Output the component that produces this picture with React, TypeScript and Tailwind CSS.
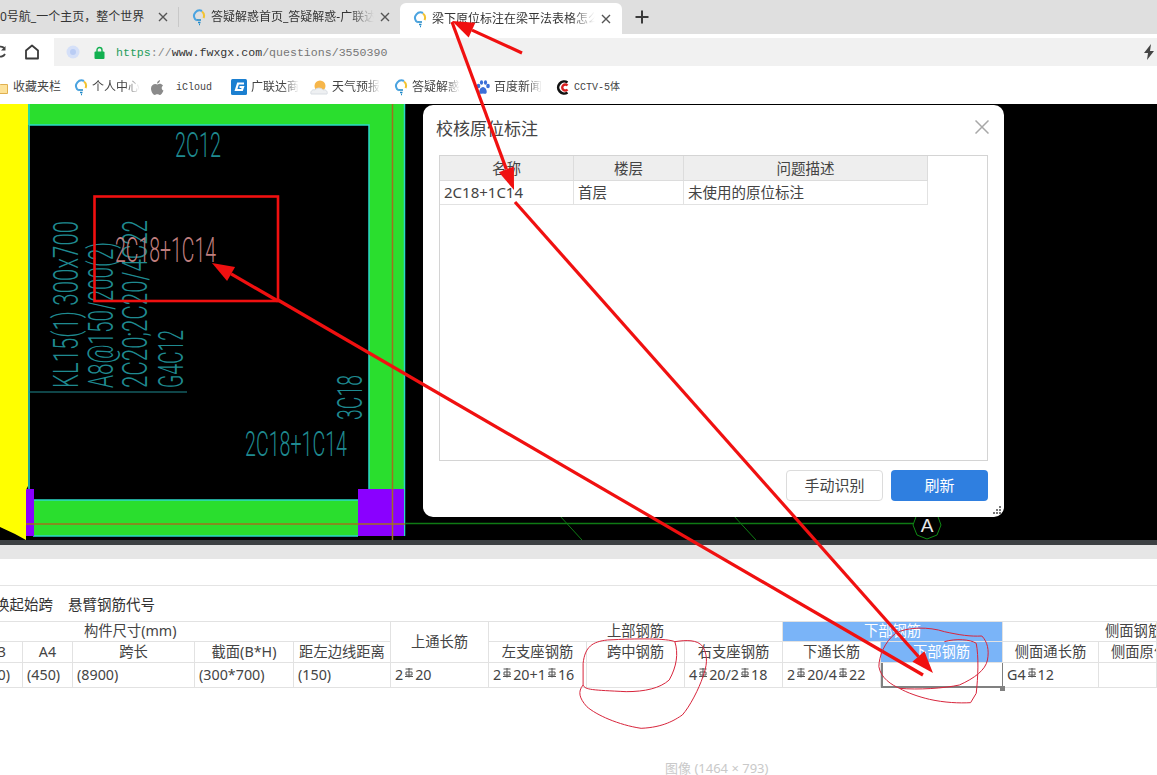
import React from 'react';

const Favicon = () => (
  <svg width="14" height="18" viewBox="0 0 14 18" className="shrink-0">
    <path d="M10 3.5 A5.5 5.5 0 0 1 11.5 10" fill="none" stroke="#f2c230" strokeWidth="2" />
    <path d="M10 3 A5.5 5.5 0 0 0 3 11 L5 12.5" fill="none" stroke="#4aa3e0" strokeWidth="2" />
    <path d="M5 12 L9 12 M6 14.5 L8.5 14.5 M7 16.5 L8 16.5" stroke="#1e88c8" strokeWidth="1.4" />
  </svg>
);

const Close = () => (
  <svg width="10" height="10" viewBox="0 0 10 10" className="shrink-0">
    <path d="M1 1 L9 9 M9 1 L1 9" stroke="#555" strokeWidth="1.4" />
  </svg>
);

// rebar grade symbol used in the table cells
const Bar = () => (
  <svg width="10" height="10" viewBox="0 0 10 10" className="mx-px mb-[5px] inline-block shrink-0">
    <path d="M1.5 1 H8.5 M5 0 V9.5 M1 8.5 H9" stroke="#555" strokeWidth="1" />
    <path d="M2 7 V4 H8 V7 Z" fill="none" stroke="#555" strokeWidth="1" />
  </svg>
);

function Arrow({ x1, y1, x2, y2 }: { x1: number; y1: number; x2: number; y2: number }) {
  const len = Math.hypot(x2 - x1, y2 - y1);
  const ux = (x2 - x1) / len;
  const uy = (y2 - y1) / len;
  const bx = x2 - ux * 22;
  const by = y2 - uy * 22;
  const pts = `${x2},${y2} ${bx - uy * 8},${by + ux * 8} ${bx + uy * 8},${by - ux * 8}`;
  return (
    <g>
      <line x1={x1} y1={y1} x2={bx} y2={by} stroke="#f01010" strokeWidth="3.2" />
      <polygon points={pts} fill="#f01010" />
    </g>
  );
}

function CadText({ x, y, w, children, color = '#1f8a90', vertical = false }: { x: number; y: number; w: number; children: string; color?: string; vertical?: boolean }) {
  return (
    <text
      transform={`translate(${x} ${y})${vertical ? ' rotate(-90)' : ''}`}
      fontFamily="Roboto, 'Liberation Sans', sans-serif"
      fontWeight="300"
      fontSize="35"
      fill={color}
      textLength={w}
      lengthAdjust="spacingAndGlyphs"
    >
      {children}
    </text>
  );
}

function Bookmark({ icon, label, left, fade = true, mono = false }: { icon: React.ReactNode; label: string; left: string; fade?: boolean; mono?: boolean }) {
  return (
    <div className={`flex items-center gap-1 ${left}`}>
      {icon}
      <span className={`overflow-hidden whitespace-nowrap ${mono ? "font-['Liberation_Mono','Noto_Sans_CJK_SC',monospace] text-[10px]" : 'text-xs'} ${fade ? 'w-[48px] [mask-image:linear-gradient(to_right,black_70%,transparent)]' : ''}`}>
        {label}
      </span>
    </div>
  );
}

function Cell({ children, className = '' }: { children?: React.ReactNode; className?: string }) {
  return (
    <div className={`flex items-center overflow-hidden whitespace-nowrap border-r border-b border-[#e2e2e2] ${className}`}>
      {children}
    </div>
  );
}

export default function App() {
  return (
    <div className="relative flex h-[775px] w-[1157px] flex-col overflow-hidden bg-white font-['Noto_Sans','Noto_Sans_CJK_SC',sans-serif] text-[#333]">
      {/* Tabs */}
      <div className="flex h-[34px] shrink-0 bg-[#dfdfdf] text-xs">
        <div className="flex w-[178px] items-center pr-[10px]">
          <span className="flex-1 overflow-hidden whitespace-nowrap">0号航_一个主页，整个世界</span>
          <Close />
        </div>
        <div className="my-[7px] w-px bg-[#c8c8c8]" />
        <div className="flex w-[221px] items-center pl-[13px] pr-[10px]">
          <Favicon />
          <span className="ml-[5px] mr-[6px] flex-1 overflow-hidden whitespace-nowrap [mask-image:linear-gradient(to_right,black_85%,transparent)]">答疑解惑首页_答疑解惑-广联达服务新干线</span>
          <Close />
        </div>
        <div className="mt-[3px] flex w-[222px] items-center rounded-t-md bg-white pl-[13px] pr-[11px]">
          <Favicon />
          <span className="ml-[5px] mr-[6px] flex-1 overflow-hidden whitespace-nowrap [mask-image:linear-gradient(to_right,black_85%,transparent)]">梁下原位标注在梁平法表格怎么输入</span>
          <Close />
        </div>
        <div className="ml-[13px] flex items-center">
          <svg width="14" height="14" viewBox="0 0 14 14">
            <path d="M7 0.5 V13.5 M0.5 7 H13.5" stroke="#3a3a3a" strokeWidth="2" />
          </svg>
        </div>
      </div>

      {/* Address row */}
      <div className="mt-1 flex h-[28px] shrink-0 items-center">
        <div className="flex w-[54px] items-center">
          <svg width="12" height="14" viewBox="0 0 12 14" className="ml-[-6px]">
            <path d="M10.5 3.5 A5 5 0 1 0 11 9" fill="none" stroke="#444" strokeWidth="1.8" />
            <path d="M11.5 1 V5.5 H7" fill="#444" />
          </svg>
          <svg width="16" height="16" viewBox="0 0 16 16" className="ml-[18px]">
            <path d="M2 14.5 V6.5 L8 1.5 L14 6.5 V14.5 Z" fill="none" stroke="#3a3a3a" strokeWidth="1.8" strokeLinejoin="round" />
          </svg>
        </div>
        <div className="flex h-full flex-1 items-center bg-[#f1f1f1]">
          <svg width="14" height="14" viewBox="0 0 14 14" className="ml-[12px]">
            <circle cx="7" cy="7" r="6.5" fill="#d5e0f8" />
            <circle cx="7" cy="7" r="3" fill="#b9ccf4" />
          </svg>
          <svg width="11" height="13" viewBox="0 0 11 13" className="ml-[14px]">
            <path d="M3 6 V4 A2.5 2.5 0 0 1 8 4 V6" fill="none" stroke="#12b050" strokeWidth="1.4" />
            <rect x="0.5" y="5.5" width="10" height="7.5" rx="1" fill="#12b050" />
          </svg>
          <span className="ml-[11px] mt-px font-['Liberation_Mono',monospace] text-[11.6px]">
            <span className="text-[#1f9d5c]">https</span>
            <span className="text-[#888]">://</span>
            <span className="text-[#333]">www.fwxgx.com</span>
            <span className="text-[#777]">/questions/3550390</span>
          </span>
          <svg width="12" height="16" viewBox="0 0 12 16" className="ml-auto mr-[2px]">
            <path d="M8 0 L1 9 H5 L4 16 L11 7 H7 Z" fill="#444" />
          </svg>
        </div>
      </div>

      {/* Bookmarks */}
      <div className="flex h-[38px] shrink-0 items-center pt-[4px] text-[#444]">
        <Bookmark
          left="ml-[-7px]"
          fade={false}
          label="收藏夹栏"
          icon={
            <svg width="15" height="13" viewBox="0 0 15 13" className="mr-px">
              <path d="M0.5 2 H6 L7.5 3.5 H14.5 V12.5 H0.5 Z" fill="#fde29a" stroke="#e0b050" />
            </svg>
          }
        />
        <Bookmark left="ml-[13px]" label="个人中心" icon={<Favicon />} />
        <Bookmark
          left="ml-[11px]"
          fade={false}
          mono
          label="iCloud"
          icon={
            <svg width="13" height="15" viewBox="0 0 13 15" className="mr-[8px]">
              <path d="M9 0 C9 2 7.5 3.5 6 3.5 C6 2 7.5 0.3 9 0 Z M6.5 4.5 C8 3.5 10.5 3.5 12 5.5 C10 7 10.5 10 12.5 10.5 C11.5 13 10 15 8.8 15 C7.8 15 7.5 14.3 6.3 14.3 C5 14.3 4.8 15 3.8 15 C2.2 15 0 11.5 0 8.5 C0 4.5 4 3 6.5 4.5 Z" fill="#8a8a8a" />
            </svg>
          }
        />
        <Bookmark
          left="ml-[19px]"
          label="广联达商务"
          icon={
            <svg width="16" height="16" viewBox="0 0 16 16">
              <rect width="16" height="16" rx="1.5" fill="#1b7fd0" />
              <path d="M13 4.5 H7 L5 11 H11 L12 8 H8.5" fill="none" stroke="#fff" strokeWidth="2.2" />
            </svg>
          }
        />
        <Bookmark
          left="ml-[11px]"
          label="天气预报"
          icon={
            <svg width="18" height="16" viewBox="0 0 18 16">
              <circle cx="10" cy="7" r="5.5" fill="#f6b64a" />
              <path d="M1 15 C0 12 3 10 5 11 C7 8 12 9 13 11 C16 10 18 13 17 15 Z" fill="#eef0f2" stroke="#d8dde2" />
            </svg>
          }
        />
        <Bookmark left="ml-[14px]" label="答疑解惑" icon={<Favicon />} />
        <Bookmark
          left="ml-[16px]"
          label="百度新闻"
          icon={
            <svg width="14" height="15" viewBox="0 0 14 15">
              <g fill="#3b6fd8">
                <ellipse cx="2.5" cy="6" rx="1.8" ry="2.3" />
                <ellipse cx="5.5" cy="2.5" rx="1.6" ry="2.2" />
                <ellipse cx="9.5" cy="2.5" rx="1.6" ry="2.2" />
                <ellipse cx="12" cy="6" rx="1.8" ry="2.3" />
                <path d="M7 7 C9.5 7 11.5 11 10.5 13 C9.5 14.5 8 13.5 7 13.5 C6 13.5 4.5 14.5 3.5 13 C2.5 11 4.5 7 7 7 Z" />
              </g>
            </svg>
          }
        />
        <Bookmark
          left="ml-[13px]"
          fade={false}
          mono
          label="CCTV-5体"
          icon={
            <svg width="15" height="15" viewBox="0 0 15 15">
              <path d="M12.5 2.5 A6 6 0 1 0 12.5 12.5" fill="none" stroke="#111" strokeWidth="2.6" />
              <path d="M12.5 5.5 A3 3 0 1 0 12.5 9.5" fill="none" stroke="#d81e1e" strokeWidth="2.4" />
            </svg>
          }
        />
      </div>

      {/* CAD canvas */}
      <div className="h-[436px] shrink-0 bg-black">
        <svg width="1157" height="436" viewBox="0 104 1157 436" className="block">
          <rect x="28" y="104" width="377" height="21" fill="#2ade2e" />
          <rect x="369" y="104" width="36" height="386" fill="#2ade2e" />
          <rect x="33" y="500" width="326" height="36" fill="#2ade2e" />
          <path d="M29 125 H369 V489 M29 104 V500 H358 M33 536 H358 M404.5 104 V536" fill="none" stroke="#2bd9c8" strokeWidth="1.5" />
          <rect x="358" y="489" width="46" height="47" fill="#8a00ff" />
          <rect x="26" y="489" width="8" height="47" fill="#8a00ff" />
          <path d="M0 104 H28 V486 L26 490 V540 L15 534 L0 527 Z" fill="#ffff00" />
          <path d="M392.5 104 V540" stroke="#a0701e" strokeWidth="1.5" />
          <path d="M26 524 H405" stroke="#a0701e" strokeWidth="1.5" />
          <path d="M405 523.5 H913" stroke="#0f7a14" strokeWidth="1.5" />
          <path d="M560 516 L582 540 M733 515 L756 540" stroke="#0f7a14" strokeWidth="1" />
          <polygon points="927,510 937,514 941,525 937,535 927,539 917,535 913,525 917,514" fill="#000" stroke="#0f8a14" strokeWidth="1" />
          <text x="927" y="532" textAnchor="middle" fontFamily="'Liberation Sans', sans-serif" fontSize="19" fill="#e8e8e8">A</text>

          <path d="M29 392 H187" stroke="#1f8a90" strokeWidth="1" />
          <CadText x={175} y={156.5} w={46}>2C12</CadText>
          <CadText x={245} y={456} w={102}>2C18+1C14</CadText>
          <CadText x={362} y={420} w={45} vertical>3C18</CadText>
          <CadText x={78} y={388} w={167} vertical>KL15(1) 300x700</CadText>
          <CadText x={113} y={388} w={146} vertical>A8@150/200(2)</CadText>
          <CadText x={147} y={388} w={168} vertical>2C20;2C20/4C22</CadText>
          <CadText x={183} y={388} w={58} vertical>G4C12</CadText>
          <CadText x={115} y={262} w={101} color="#c07f7f">2C18+1C14</CadText>
        </svg>
      </div>
      <div className="h-[5px] shrink-0 bg-[#3c4043]" />
      <div className="h-[14px] shrink-0 bg-[#e6e6e6]" />

      {/* Property panel */}
      <div className="h-[27px] shrink-0 border-b border-[#e4e4e4]" />
      <div className="flex h-[35px] shrink-0 items-start gap-[15px] pt-[8px] text-[14.5px] leading-[20px]">
        <span className="ml-[-5px]">换起始跨</span>
        <span>悬臂钢筋代号</span>
      </div>
      <div className="grid w-[1157px] shrink-0 grid-cols-[23px_50px_122px_99px_97px_98px_98px_98px_98px_98px_122px_96px_58px] grid-rows-[20px_21px_25px] border-t border-[#e2e2e2] text-[14.3px] leading-none text-[#444]">
        <Cell className="col-span-5 pl-[84px]">构件尺寸(mm)</Cell>
        <Cell className="row-span-2 justify-center">上通长筋</Cell>
        <Cell className="col-span-3 justify-center">上部钢筋</Cell>
        <Cell className="col-span-2 justify-center bg-[#7ab4f8] text-white">下部钢筋</Cell>
        <Cell className="col-span-2 pl-[102px]">侧面钢筋</Cell>

        <Cell className="justify-end pr-[16px]">A3</Cell>
        <Cell className="justify-center">A4</Cell>
        <Cell className="justify-center">跨长</Cell>
        <Cell className="justify-center">截面(B*H)</Cell>
        <Cell className="justify-center">距左边线距离</Cell>
        <Cell className="justify-center">左支座钢筋</Cell>
        <Cell className="justify-center">跨中钢筋</Cell>
        <Cell className="justify-center">右支座钢筋</Cell>
        <Cell className="justify-center">下通长筋</Cell>
        <Cell className="justify-center bg-[#7ab4f8] text-white">下部钢筋</Cell>
        <Cell className="justify-center">侧面通长筋</Cell>
        <Cell className="pl-[12px]">侧面原位标注</Cell>

        <Cell className="justify-end pr-[12px] pt-px">(450)</Cell>
        <Cell className="pl-[4px] pt-px">(450)</Cell>
        <Cell className="pl-[4px] pt-px">(8900)</Cell>
        <Cell className="pl-[4px] pt-px">(300*700)</Cell>
        <Cell className="pl-[4px] pt-px">(150)</Cell>
        <Cell className="pl-[4px]">2<Bar />20</Cell>
        <Cell className="pl-[4px]">2<Bar />20+1<Bar />16</Cell>
        <Cell />
        <Cell className="pl-[4px]">4<Bar />20/2<Bar />18</Cell>
        <Cell className="pl-[4px]">2<Bar />20/4<Bar />22</Cell>
        <Cell className="border-x-2 border-b-2 border-x-[#808080] border-b-[#808080]" />
        <Cell className="pl-[4px]">G4<Bar />12</Cell>
        <Cell />
      </div>
      <div className="flex-1 pl-[665px] pt-[72px] text-[13px] leading-[16px] text-[#c9c9c9]">图像 (1464 × 793)</div>

      {/* Dialog */}
      <div className="absolute left-[423px] top-[105px] flex h-[412px] w-[581px] flex-col rounded-[10px] bg-white px-[16px] text-[#444]">
        <div className="flex h-[50px] shrink-0 items-center pb-[2px]">
          <span className="ml-[-3px] text-[17px]">校核原位标注</span>
          <svg width="14" height="14" viewBox="0 0 14 14" className="ml-auto mr-[-1px] mt-[-4px]">
            <path d="M0.5 0.5 L13.5 13.5 M13.5 0.5 L0.5 13.5" stroke="#a8a8a8" strokeWidth="1.5" />
          </svg>
        </div>
        <div className="h-[306px] shrink-0 border border-[#d4d4d4] text-[14.5px]">
          <div className="grid w-[488px] grid-cols-[134px_110px_244px] grid-rows-[25px_24px]">
            <div className="flex items-center justify-center border-r border-b border-[#dcdcdc] bg-[#eeeeee] pt-px">名称</div>
            <div className="flex items-center justify-center border-r border-b border-[#dcdcdc] bg-[#eeeeee] pt-px">楼层</div>
            <div className="flex items-center justify-center border-r border-b border-[#dcdcdc] bg-[#eeeeee] pt-px">问题描述</div>
            <div className="flex items-center border-r border-b border-[#e2e2e2] pl-[4px] text-[15px]">2C18+1C14</div>
            <div className="flex items-center border-r border-b border-[#e2e2e2] pl-[4px]">首层</div>
            <div className="flex items-center border-r border-b border-[#e2e2e2] pl-[4px]">未使用的原位标注</div>
          </div>
        </div>
        <div className="mt-[9px] flex justify-end gap-2 text-[15px]">
          <div className="flex h-[31px] w-[97px] items-center justify-center rounded border border-[#dcdcdc]">手动识别</div>
          <div className="flex h-[31px] w-[97px] items-center justify-center rounded bg-[#2f7fe0] text-white">刷新</div>
        </div>
        <svg width="10" height="10" viewBox="0 0 10 10" className="absolute bottom-[2px] right-[2px]">
          <g fill="#777">
            <rect x="7" y="1" width="2" height="2" />
            <rect x="4" y="4" width="2" height="2" />
            <rect x="7" y="4" width="2" height="2" />
            <rect x="1" y="7" width="2" height="2" />
            <rect x="4" y="7" width="2" height="2" />
            <rect x="7" y="7" width="2" height="2" />
          </g>
        </svg>
      </div>

      {/* Selected cell handle */}
      <div className="absolute left-[1000px] top-[686px] h-[5px] w-[5px] bg-[#808080]" />

      {/* Red markup drawn on top of the screenshot */}
      <svg width="1157" height="775" viewBox="0 0 1157 775" className="pointer-events-none absolute left-0 top-0">
        <rect x="94.5" y="196.5" width="183.5" height="104.5" fill="none" stroke="#f01010" strokeWidth="2.6" />
        <Arrow x1={522} y1={53} x2={452} y2={21} />
        <Arrow x1={452} y1={22} x2={514} y2={190} />
        <Arrow x1={278} y1={301} x2={212} y2={263} />
        <Arrow x1={515} y1={202} x2={933} y2={673} />
        <line x1="278" y1="300" x2="923" y2="675" stroke="#f01010" strokeWidth="3.2" />
        <g transform="translate(570 610) scale(0.3744 0.3333)" fill="none" stroke="#d8253c" strokeWidth="1">
          <path
            vectorEffect="non-scaling-stroke"
            d="M280 95 C260 85 180 85 100 90 C60 95 40 110 35 160 L35 225 C40 240 60 240 150 245 C200 245 240 235 265 210 C285 170 290 130 280 95 C310 90 340 88 355 110 C370 140 365 170 355 200 C345 235 320 290 300 315 C280 330 250 352 190 355 C130 345 70 315 45 290 C25 265 20 245 35 225"
          />
          <path
            vectorEffect="non-scaling-stroke"
            d="M1100 78 C1070 80 1040 75 1000 65 C960 50 900 50 870 70 C840 95 825 140 825 170 C830 205 860 225 880 235 C930 240 1000 235 1040 225 C1080 205 1110 180 1115 150 C1120 120 1115 95 1100 78 M1000 95 C1030 85 1070 88 1085 100 C1092 140 1090 200 1085 250 L1070 278 C1040 280 1000 278 960 268 C930 260 900 248 880 235"
          />
        </g>
      </svg>
    </div>
  );
}
